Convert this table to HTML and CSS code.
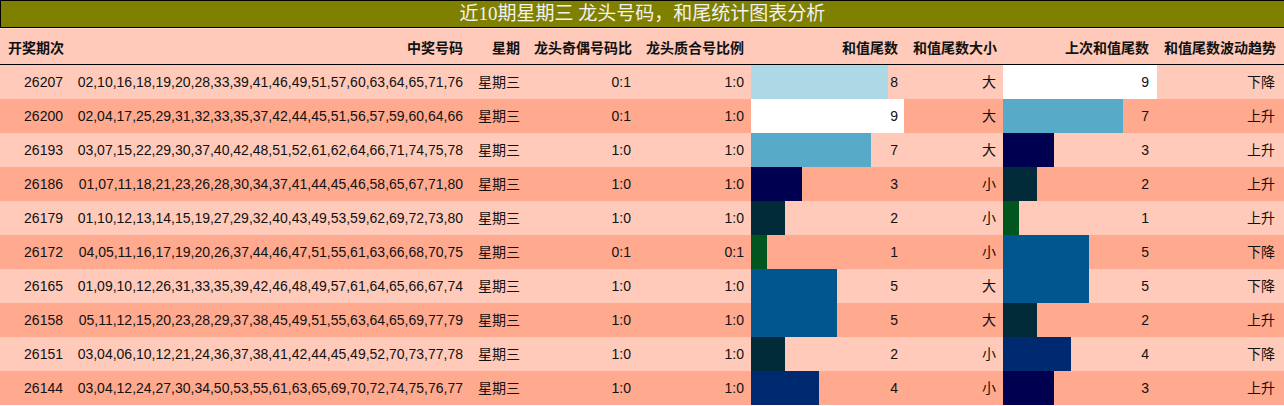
FILE: index.html
```html
<!DOCTYPE html>
<html lang="zh">
<head>
<meta charset="utf-8">
<title>龙头号码和尾统计</title>
<link rel="stylesheet" href="styles.css">
</head>
<body>
<div class="title">近10期星期三 龙头号码，和尾统计图表分析</div>
<table class="stats">
  <colgroup>
    <col class="c-issue"><col class="c-nums"><col class="c-week"><col class="c-oe"><col class="c-pc">
    <col class="c-sum"><col class="c-size"><col class="c-prev"><col class="c-trend">
  </colgroup>
  <thead>
    <tr>
      <th>开奖期次</th><th>中奖号码</th><th>星期</th><th>龙头奇偶号码比</th><th>龙头质合号比例</th>
      <th>和值尾数</th><th>和值尾数大小</th><th>上次和值尾数</th><th>和值尾数波动趋势</th>
    </tr>
  </thead>
  <tbody>
    <tr class="light"><td>26207</td><td>02,10,16,18,19,20,28,33,39,41,46,49,51,57,60,63,64,65,71,76</td><td>星期三</td><td>0:1</td><td>1:0</td><td class="barcell"><span class="bar v8" style="width:137px"></span><span class="num">8</span></td><td>大</td><td class="barcell"><span class="bar v9" style="width:154px"></span><span class="num">9</span></td><td>下降</td></tr>
    <tr class="dark"><td>26200</td><td>02,04,17,25,29,31,32,33,35,37,42,44,45,51,56,57,59,60,64,66</td><td>星期三</td><td>0:1</td><td>1:0</td><td class="barcell"><span class="bar v9" style="width:153px"></span><span class="num">9</span></td><td>大</td><td class="barcell"><span class="bar v7" style="width:120px"></span><span class="num">7</span></td><td>上升</td></tr>
    <tr class="light"><td>26193</td><td>03,07,15,22,29,30,37,40,42,48,51,52,61,62,64,66,71,74,75,78</td><td>星期三</td><td>1:0</td><td>1:0</td><td class="barcell"><span class="bar v7" style="width:120px"></span><span class="num">7</span></td><td>大</td><td class="barcell"><span class="bar v3" style="width:51px"></span><span class="num">3</span></td><td>上升</td></tr>
    <tr class="dark"><td>26186</td><td>01,07,11,18,21,23,26,28,30,34,37,41,44,45,46,58,65,67,71,80</td><td>星期三</td><td>1:0</td><td>1:0</td><td class="barcell"><span class="bar v3" style="width:51px"></span><span class="num">3</span></td><td>小</td><td class="barcell"><span class="bar v2" style="width:34px"></span><span class="num">2</span></td><td>上升</td></tr>
    <tr class="light"><td>26179</td><td>01,10,12,13,14,15,19,27,29,32,40,43,49,53,59,62,69,72,73,80</td><td>星期三</td><td>1:0</td><td>1:0</td><td class="barcell"><span class="bar v2" style="width:34px"></span><span class="num">2</span></td><td>小</td><td class="barcell"><span class="bar v1" style="width:16px"></span><span class="num">1</span></td><td>上升</td></tr>
    <tr class="dark"><td>26172</td><td>04,05,11,16,17,19,20,26,37,44,46,47,51,55,61,63,66,68,70,75</td><td>星期三</td><td>0:1</td><td>0:1</td><td class="barcell"><span class="bar v1" style="width:16px"></span><span class="num">1</span></td><td>小</td><td class="barcell"><span class="bar v5" style="width:86px"></span><span class="num">5</span></td><td>下降</td></tr>
    <tr class="light"><td>26165</td><td>01,09,10,12,26,31,33,35,39,42,46,48,49,57,61,64,65,66,67,74</td><td>星期三</td><td>1:0</td><td>1:0</td><td class="barcell"><span class="bar v5" style="width:86px"></span><span class="num">5</span></td><td>大</td><td class="barcell"><span class="bar v5" style="width:86px"></span><span class="num">5</span></td><td>下降</td></tr>
    <tr class="dark"><td>26158</td><td>05,11,12,15,20,23,28,29,37,38,45,49,51,55,63,64,65,69,77,79</td><td>星期三</td><td>1:0</td><td>1:0</td><td class="barcell"><span class="bar v5" style="width:86px"></span><span class="num">5</span></td><td>大</td><td class="barcell"><span class="bar v2" style="width:34px"></span><span class="num">2</span></td><td>上升</td></tr>
    <tr class="light"><td>26151</td><td>03,04,06,10,12,21,24,36,37,38,41,42,44,45,49,52,70,73,77,78</td><td>星期三</td><td>1:0</td><td>1:0</td><td class="barcell"><span class="bar v2" style="width:34px"></span><span class="num">2</span></td><td>小</td><td class="barcell"><span class="bar v4" style="width:68px"></span><span class="num">4</span></td><td>下降</td></tr>
    <tr class="dark"><td>26144</td><td>03,04,12,24,27,30,34,50,53,55,61,63,65,69,70,72,74,75,76,77</td><td>星期三</td><td>1:0</td><td>1:0</td><td class="barcell"><span class="bar v4" style="width:68px"></span><span class="num">4</span></td><td>小</td><td class="barcell"><span class="bar v3" style="width:51px"></span><span class="num">3</span></td><td>上升</td></tr>
  </tbody>
</table>
</body>
</html>
```
FILE: styles.css
```css
html, body {
  margin: 0;
  padding: 0;
  background: #ffffff;
  overflow: hidden;
}

.title {
  box-sizing: border-box;
  height: 28px;
  border: 1px solid #000000;
  border-right: 0;
  background: #808000;
  color: #f2f2f2;
  font-family: "Liberation Serif", "Noto Sans CJK SC", serif;
  font-size: 19px;
  line-height: 26px;
  text-align: center;
}

.stats {
  width: 1284px;
  table-layout: fixed;
  border-collapse: collapse;
  border-spacing: 0;
  font-family: "Liberation Sans", "Noto Sans CJK SC", sans-serif;
  font-size: 14px;
  color: #111111;
}

.c-issue { width: 70px; }
.c-nums { width: 400px; }
.c-week { width: 57px; }
.c-oe { width: 111px; }
.c-pc { width: 113px; }
.c-sum { width: 155px; }
.c-size { width: 97px; }
.c-prev { width: 154px; }
.c-trend { width: 127px; }

.stats th,
.stats td {
  padding: 0 7px;
  text-align: right;
  white-space: nowrap;
  overflow: hidden;
}

.stats thead tr {
  background: #ffcab9;
}

.stats th {
  height: 36px;
  padding-top: 1px;
  box-sizing: border-box;
  font-weight: bold;
  font-size: 14px;
  border-bottom: 1px solid #000000;
  border-top: 1px solid #ffd9cc;
}

.stats th:first-child { padding-right: 6px; }

.stats td {
  height: 34px;
  line-height: 34px;
}

.stats td:nth-child(6),
.stats th:nth-child(6),
.stats td:nth-child(8),
.stats th:nth-child(8) {
  padding-right: 8px;
}

.stats td:nth-child(9),
.stats th:nth-child(9) {
  padding-right: 9px;
}

.light { background: #ffcab9; }
.dark { background: #ffa98f; }

.barcell {
  position: relative;
}

.bar {
  position: absolute;
  left: 0;
  top: 0;
  bottom: 0;
}

.num {
  position: relative;
}

.v1 { background: #00561e; }
.v2 { background: #022b3a; }
.v3 { background: #000050; }
.v4 { background: #002a70; }
.v5 { background: #01568e; }
.v7 { background: #57abc8; }
.v8 { background: #add8e6; }
.v9 { background: #ffffff; }
```
